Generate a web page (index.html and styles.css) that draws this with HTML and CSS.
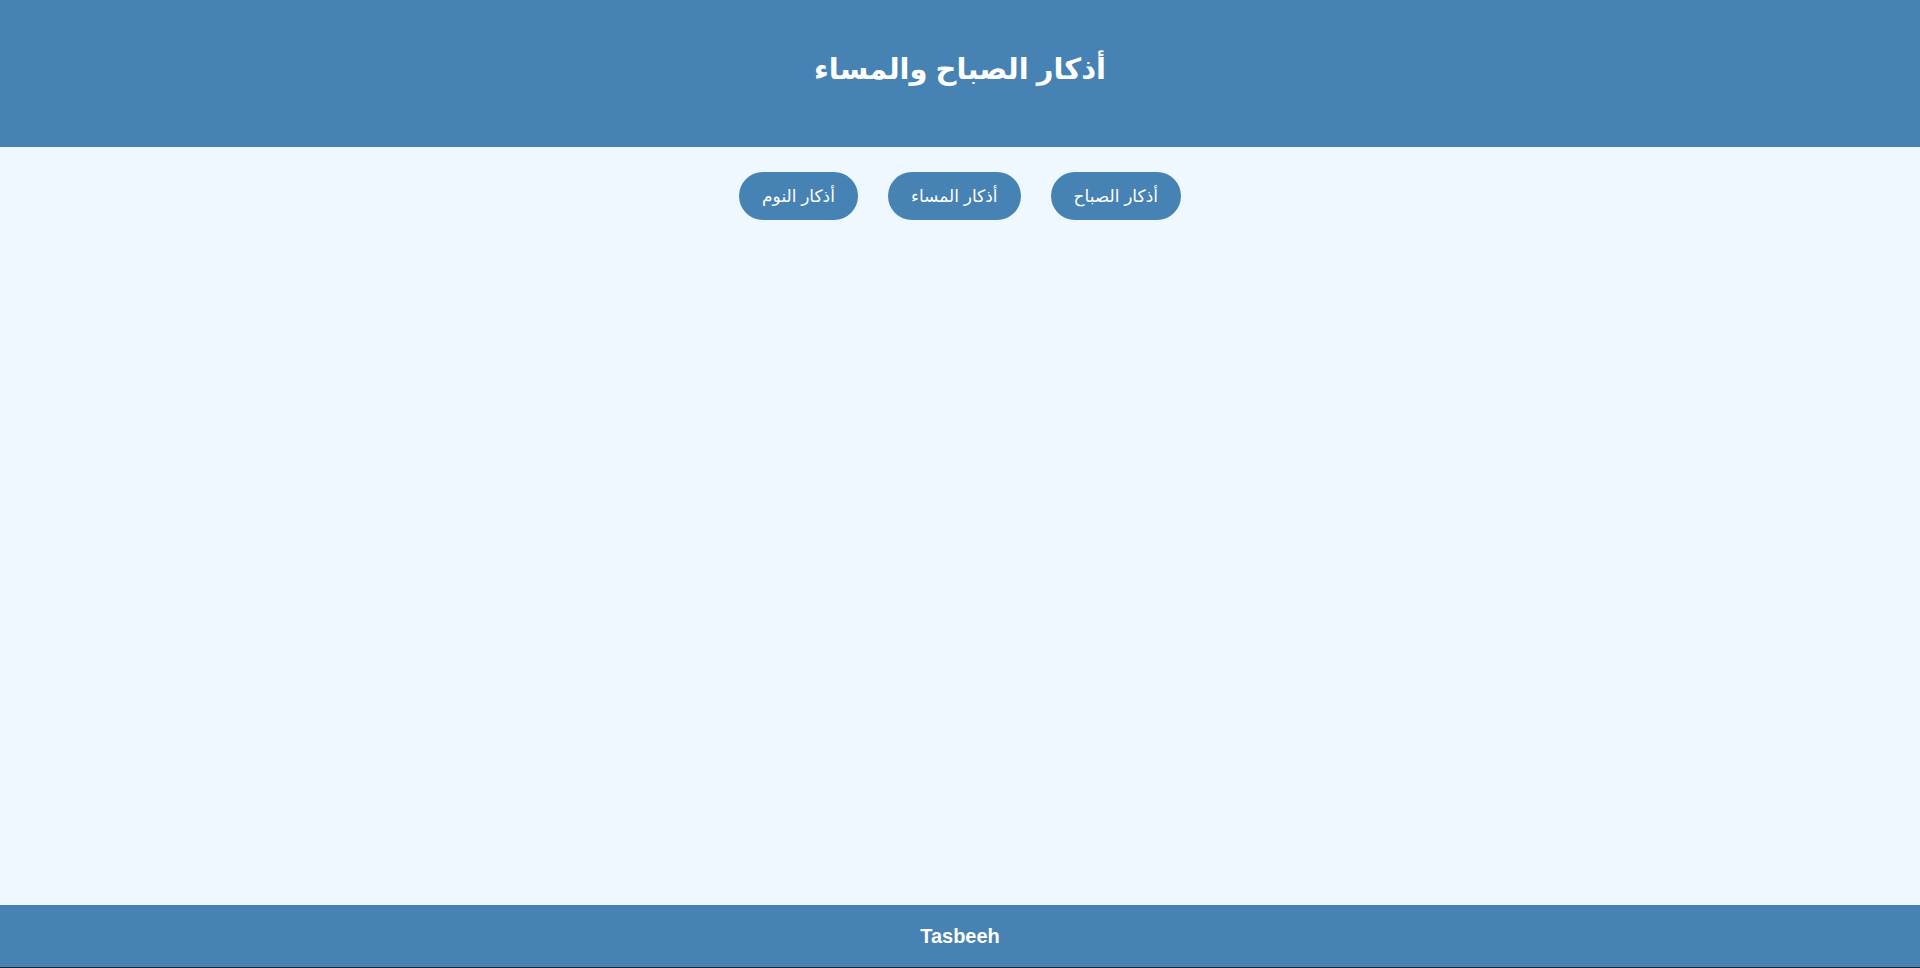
FILE: index.html
```html
<!DOCTYPE html>
<html lang="ar" dir="rtl">
<head>
<meta charset="utf-8">
<title>أذكار الصباح والمساء</title>
<link rel="stylesheet" href="styles.css">
</head>
<body>
<div class="page">
  <header class="header">
    <h1 class="title">أذكار الصباح والمساء</h1>
  </header>
  <main class="main">
    <nav class="tabs">
      <button class="tab">أذكار الصباح</button>
      <button class="tab">أذكار المساء</button>
      <button class="tab">أذكار النوم</button>
    </nav>
  </main>
  <footer class="footer">
    <span class="brand" dir="ltr">Tasbeeh</span>
  </footer>
  <div class="edge"></div>
</div>
</body>
</html>
```
FILE: styles.css
```css
* { box-sizing: border-box; }
html, body { margin: 0; padding: 0; height: 100%; }
body {
  background: #F0F8FF;
  font-family: Arial, "Liberation Sans", "DejaVu Sans", sans-serif;
  color: #fff;
}
.page {
  display: flex;
  flex-direction: column;
  height: 968px;
}
.header {
  background: #4682B4;
  height: 147px;
  display: flex;
  justify-content: center;
  align-items: flex-start;
  padding-top: 44px;
}
.title {
  margin: 0;
  font-size: 29px;
  font-weight: bold;
  line-height: 50px;
  color: #fff;
}
.main {
  flex: 1;
  display: flex;
  flex-direction: column;
  align-items: center;
  padding-top: 25px;
}
.tabs {
  display: flex;
  gap: 30px;
}
.tab {
  background: #4682B4;
  color: #fff;
  border: none;
  height: 48px;
  padding: 0 23px;
  border-radius: 24px;
  font-family: Arial, "Liberation Sans", "DejaVu Sans", sans-serif;
  font-size: 17px;
  cursor: pointer;
}
.footer {
  background: #4682B4;
  height: 62px;
  display: flex;
  justify-content: center;
  align-items: center;
}
.brand {
  font-weight: bold;
  font-size: 20px;
  color: #fff;
}
.edge {
  height: 1px;
  background: #1b2530;
}
```
